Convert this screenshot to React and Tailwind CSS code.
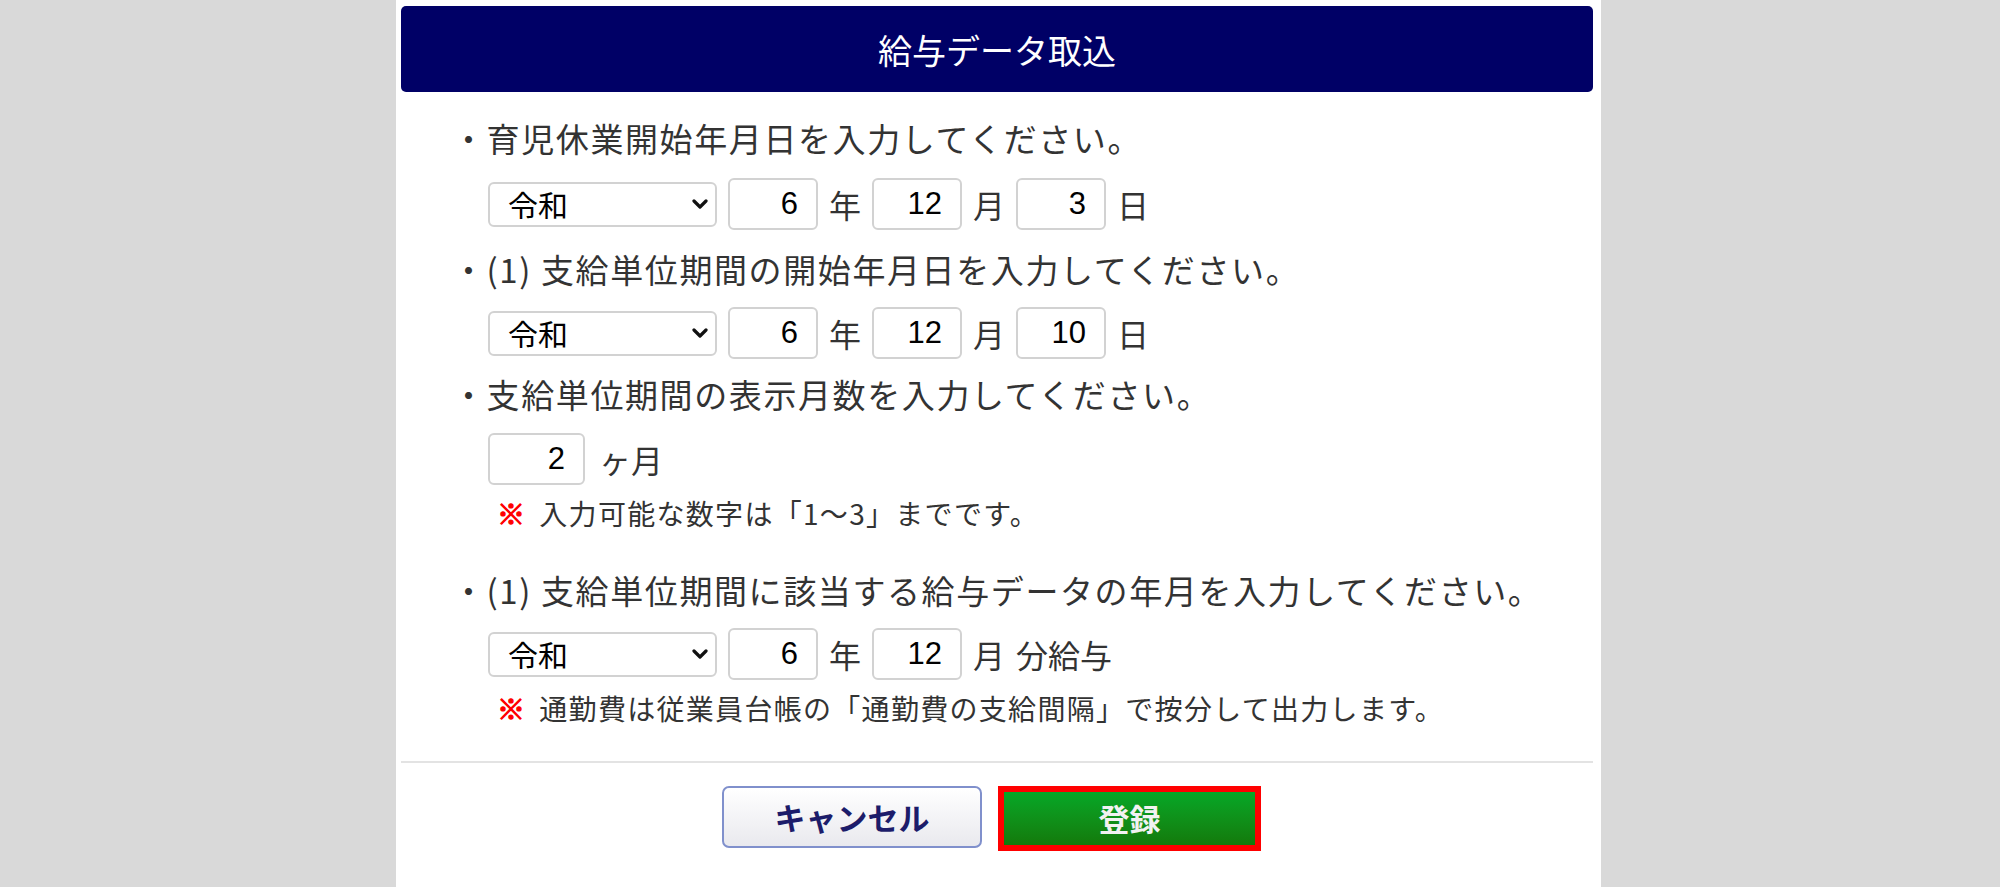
import { useState } from "react";

const jp = "font-['Meiryo','Noto_Sans_CJK_JP',sans-serif]";
const num = "font-['Liberation_Sans','Noto_Sans_CJK_JP',sans-serif]";

const EraSelect = () => (
  <div className="relative w-[229px] h-[45px]">
    <select
      defaultValue="令和"
      className={`${jp} appearance-none w-full h-full rounded-[6px] border-2 border-[#d2d2d2] bg-white pl-[18px] text-[30px] leading-none text-black outline-none`}
    >
      <option>令和</option>
      <option>平成</option>
      <option>昭和</option>
    </select>
    <svg
      className="pointer-events-none absolute right-[9px] top-[16px] w-[16px] h-[12px]"
      viewBox="0 0 16 12"
      fill="none"
      stroke="#111"
      strokeWidth="3.2"
      strokeLinecap="round"
      strokeLinejoin="round"
    >
      <path d="M2 3l6 6 6-6" />
    </svg>
  </div>
);

const NumInput = ({ value, w = "w-[90px]" }) => (
  <input
    defaultValue={value}
    className={`${num} ${w} h-[52px] rounded-[6px] border-2 border-[#d2d2d2] bg-white pr-[18px] text-right text-[31px] text-black outline-none`}
  />
);

const Unit = ({ children }) => (
  <span className={`${jp} text-[32px] leading-none text-[#333]`}>{children}</span>
);

// bullet is part of the text so it keeps its own width
const Line = ({ children, className = "" }) => (
  <p className={`${jp} ml-[56px] flex h-[48px] items-center text-[33px] tracking-[1.6px] text-[#333] ${className}`}>
    ・{children}
  </p>
);

const Note = ({ children, className = "" }) => (
  <p className={`${jp} ml-[101px] flex h-[40px] items-center text-[28px] tracking-[1.3px] text-[#333] ${className}`}>
    <span className="mr-[13px] font-bold text-[#ff0000] [-webkit-text-stroke:1.2px_#ff0000]">※</span>
    {children}
  </p>
);

const DateRow = ({ year, month, day, className = "" }) => (
  <div className={`ml-[92px] flex items-center gap-[11px] ${className}`}>
    <EraSelect />
    <NumInput value={year} />
    <Unit>年</Unit>
    <NumInput value={month} />
    <Unit>月</Unit>
    {day !== undefined ? (
      <>
        <NumInput value={day} />
        <Unit>日</Unit>
      </>
    ) : (
      <Unit>分給与</Unit>
    )}
  </div>
);

export default function App() {
  const [done, setDone] = useState(false);

  return (
    <div className="min-h-[887px] w-full bg-[#d9d9d9]">
      <div className="ml-[396px] min-h-[887px] w-[1205px] bg-white pt-[6px]">
        <div className="ml-[5px] mr-[8px] flex h-[86px] items-center justify-center rounded-[5px] bg-[#000066]">
          <h1 className={`${jp} text-[34px] text-white`}>給与データ取込</h1>
        </div>

        <Line className="mt-[23px]">育児休業開始年月日を入力してください。</Line>
        <DateRow year="6" month="12" day="3" className="mt-[15px]" />

        <Line className="mt-[16px]">(1) 支給単位期間の開始年月日を入力してください。</Line>
        <DateRow year="6" month="12" day="10" className="mt-[13px]" />

        <Line className="mt-[12px]">支給単位期間の表示月数を入力してください。</Line>
        <div className="ml-[92px] mt-[14px] flex items-center gap-[14px]">
          <NumInput value="2" w="w-[97px]" />
          <Unit>ヶ月</Unit>
        </div>
        <Note className="mt-[8px]">入力可能な数字は「1～3」までです。</Note>

        <Line className="mt-[34px]">(1) 支給単位期間に該当する給与データの年月を入力してください。</Line>
        <DateRow year="6" month="12" className="mt-[13px]" />
        <Note className="mt-[8px]">通勤費は従業員台帳の「通勤費の支給間隔」で按分して出力します。</Note>

        <div className="ml-[5px] mr-[8px] mt-[33px] h-[2px] bg-[#e3e3e3]" />

        <div className="mt-[23px] flex justify-center gap-[16px] pr-[14px]">
          <button
            type="button"
            className={`${jp} h-[62px] w-[260px] rounded-[7px] border-2 border-[#8090cc] bg-gradient-to-b from-white to-[#e9e9ee] text-[31px] font-bold text-[#1c1c6a]`}
          >
            キャンセル
          </button>
          <button
            type="button"
            onClick={() => setDone(!done)}
            className={`${jp} h-[65px] w-[263px] border-[6px] border-[#ff0000] bg-gradient-to-b from-[#05a827] to-[#137a0b] text-[31px] font-bold text-[#f2f2f2]`}
          >
            登録
          </button>
        </div>
      </div>
    </div>
  );
}
